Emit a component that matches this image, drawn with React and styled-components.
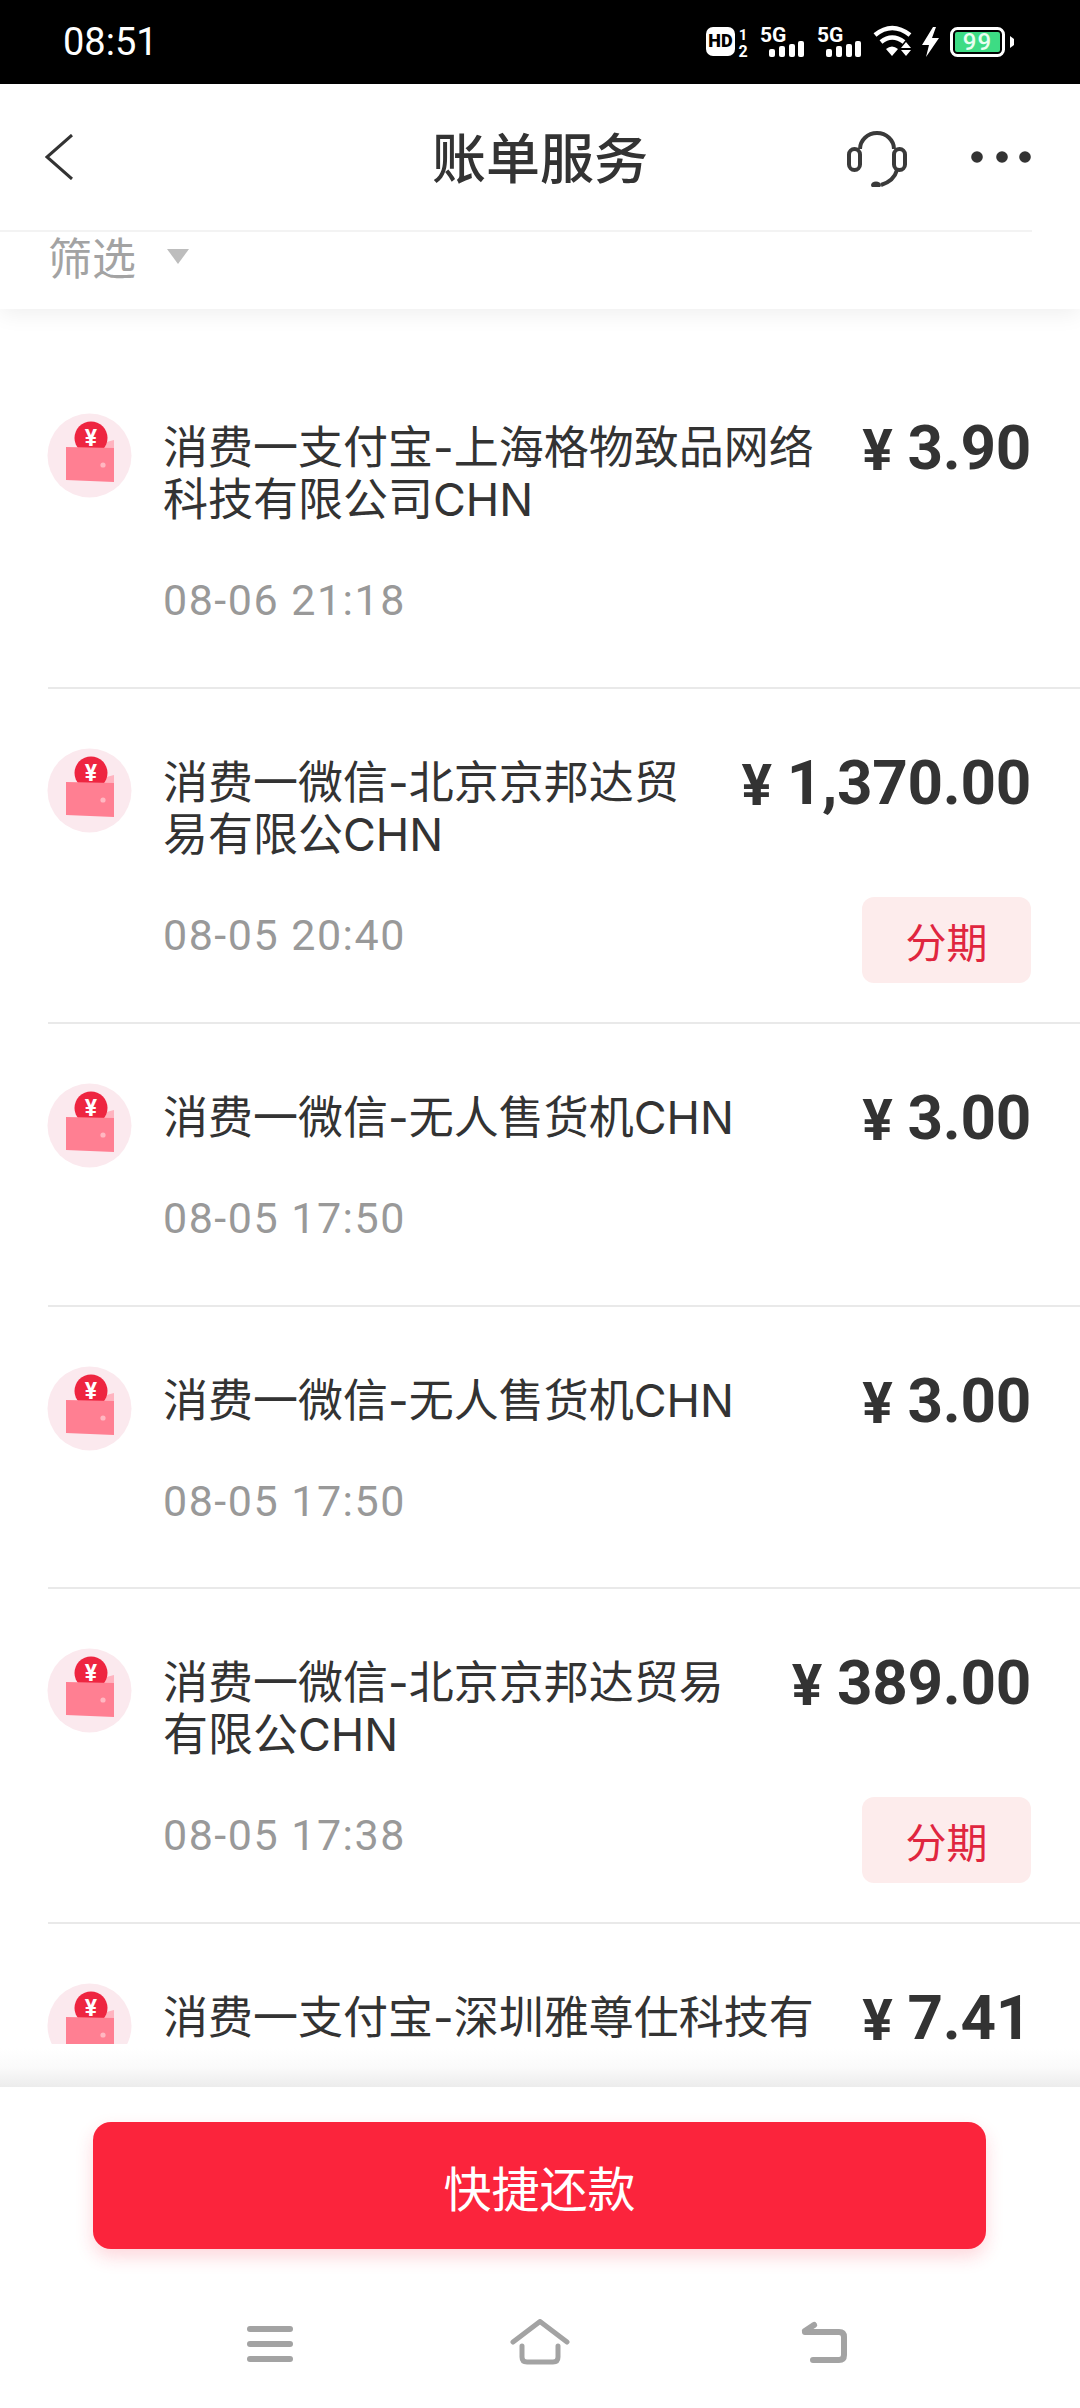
import React from 'react';
import styled, { createGlobalStyle } from 'styled-components';

const CJK = '"Noto Sans CJK SC", "Noto Sans", sans-serif';

const GlobalStyle = createGlobalStyle`
  html, body { margin: 0; padding: 0; background: #fff; }
  body { font-family: ${CJK}; overflow: hidden; }
`;

const Page = styled.div`
  width: 1080px;
  height: 2408px;
  display: flex;
  flex-direction: column;
  background: #fff;
  overflow: hidden;
`;

const StatusBar = styled.div`
  height: 84px;
  flex: none;
  background: #000;
  color: #fff;
  display: flex;
  align-items: center;
  justify-content: space-between;
  padding: 0 64px 0 63px;
  font: 400 38px Roboto, sans-serif;
`;

const TopPanel = styled.div`
  flex: none;
  background: #fff;
  position: relative;
  z-index: 2;
  box-shadow: 0 4px 22px rgba(0, 0, 0, 0.07);
`;

const Header = styled.div`
  height: 146px;
  padding-right: 49px;
  display: grid;
  grid-template-columns: 1fr auto 1fr;
  align-items: center;
`;

const HeaderLine = styled.div`
  width: 1032px;
  height: 2px;
  background: #f3f3f3;
`;

const BackButton = styled.div`
  padding-left: 45px;
  display: flex;
`;

const Title = styled.div`
  font-size: 54px;
  font-weight: 500;
  color: #333;
  line-height: 1;
  margin: 0 0 2px 49px;
`;

const HeaderActions = styled.div`
  display: flex;
  justify-content: flex-end;
  align-items: center;
  gap: 64px;
`;

const FilterRow = styled.div`
  height: 77px;
  display: flex;
  align-items: flex-start;
  padding-left: 48px;
  gap: 31px;
  color: #a3a3a3;
  font-size: 44px;
  line-height: 48px;
`;

const Caret = styled.span`
  width: 0;
  height: 0;
  margin-top: 17px;
  border-left: 11px solid transparent;
  border-right: 11px solid transparent;
  border-top: 15px solid #bdbdbd;
`;

const ListArea = styled.div`
  height: 1735px;
  flex: none;
  padding-top: 45px;
  box-sizing: border-box;
  overflow: hidden;
  background: #fff;
`;

const Row = styled.div`
  margin-left: 48px;
  padding: 59px 49px 61px 0;
  border-bottom: 2px solid #e9e9e9;
  box-sizing: border-box;
  height: ${(p) => p.$height}px;
  display: flex;
  gap: 31px;
`;

const RowIcon = styled.svg`
  width: 85px;
  height: 85px;
  flex: none;
  margin-left: -1px;
`;

const RowBody = styled.div`
  flex: 1;
  min-width: 0;
  padding-top: 9px;
`;

const RowTop = styled.div`
  display: flex;
  justify-content: space-between;
  gap: 36px;
`;

const RowName = styled.div`
  flex: 1;
  font-family: Inter, ${CJK};
  font-size: 45px;
  line-height: 52px;
  color: #333;
`;

const Amount = styled.div`
  flex: none;
  display: flex;
  align-items: center;
  height: 52px;
  line-height: 52px;
  gap: 15px;
  color: #333;
  font-family: Roboto, sans-serif;
  font-weight: 700;
  font-size: 62px;
  letter-spacing: -0.3px;
`;

const Yen = styled.span`
  font-size: 57px;
  margin-top: 5px;
`;

const RowFoot = styled.div`
  margin-top: 48px;
  height: 53px;
  display: flex;
  justify-content: space-between;
  align-items: flex-start;
`;

const RowTime = styled.div`
  font: 400 43px/53px Roboto, sans-serif;
  letter-spacing: 1.5px;
  color: #999;
`;

const SplitTag = styled.div`
  margin-top: -12px;
  width: 169px;
  height: 86px;
  border-radius: 12px;
  background: #fdecec;
  color: #e0263f;
  font-size: 41px;
  display: flex;
  align-items: center;
  justify-content: center;
  flex: none;
`;

const BottomFade = styled.div`
  height: 43px;
  flex: none;
  background: linear-gradient(to bottom, #ffffff 10%, #fafafa 55%, #ececec 100%);
`;

const BottomPanel = styled.div`
  flex: 1;
  display: flex;
  flex-direction: column;
  background: #fff;
`;

const PayButton = styled.div`
  margin: 35px 94px 0 93px;
  height: 127px;
  border-radius: 18px;
  background: #fb243c;
  box-shadow: 0 8px 18px rgba(251, 36, 60, 0.18);
  color: #fff;
  font-size: 48px;
  display: flex;
  align-items: center;
  justify-content: center;
`;

const NavBar = styled.div`
  margin-top: 70px;
  height: 46px;
  display: grid;
  grid-template-columns: 1fr auto 1fr;
  align-items: start;
  padding: 0 232px;
`;

const NavLeft = styled.svg`
  margin: 7px 0 0 15px;
`;

const NavRight = styled.svg`
  justify-self: end;
  margin-top: 2px;
`;

const StatusIcons = () => (
  <svg width="310" height="64" viewBox="708 10 310 64" fill="#fff">
    <rect x="708" y="27" width="29" height="29" rx="7" />
    <text x="722.5" y="47" fontFamily="Roboto" fontWeight="900" fontSize="18" textAnchor="middle" fill="#000">HD</text>
    <text x="745" y="40" fontFamily="Roboto" fontWeight="700" fontSize="15" textAnchor="middle">1</text>
    <text x="745" y="57" fontFamily="Roboto" fontWeight="700" fontSize="16" textAnchor="middle">2</text>
    {[762, 819].map((x) => (
      <g key={x}>
        <text x={x} y="42" fontFamily="Roboto" fontWeight="700" fontSize="21">5G</text>
        <rect x={x + 9} y="49" width="6" height="8" rx="2" />
        <rect x={x + 19} y="46" width="6" height="11" rx="2" />
        <rect x={x + 29} y="44" width="6" height="13" rx="2" />
        <rect x={x + 38} y="41" width="6" height="16" rx="2" />
      </g>
    ))}
    <g fill="none" stroke="#fff" strokeWidth="4.5">
      <path d="M877 35 Q894 21 912 35" />
      <path d="M883 42 Q894 33 906 42" />
    </g>
    <path d="M888 49 Q894 44 900 49 L894 56 Z" />
    <path d="M908 42 L913 48 L903 48 Z M903 50 L913 50 L908 56 Z" />
    <path d="M935 27 L924 45 L931 45 L928 57 L941 38 L934 38 L938 27 Z" />
    <rect x="953.5" y="28.5" width="52" height="27" rx="6" fill="none" stroke="#fff" strokeWidth="3" />
    <rect x="957" y="32" width="45" height="20" rx="2" fill="#3ddc84" />
    <text x="979.5" y="50" fontFamily="Roboto" fontWeight="500" fontSize="24" letterSpacing="1" textAnchor="middle" fill="#e8fff1">99</text>
    <path d="M1012 36 L1016 39 L1016 45 L1012 48 Z" />
  </svg>
);

const Headset = () => (
  <svg width="60" height="56" viewBox="0 0 60 56" fill="none" stroke="#3a3a3a" strokeWidth="4" style={{ marginTop: 4 }}>
    <path d="M13 18 A17 16 0 0 1 47 18" />
    <rect x="2" y="18" width="11" height="21" rx="5.5" />
    <rect x="47" y="18" width="11" height="21" rx="5.5" />
    <path d="M50 39 Q47 50 34 54" />
    <ellipse cx="29" cy="54" rx="5" ry="3.5" fill="#3a3a3a" stroke="none" />
  </svg>
);

const MoreDots = () => (
  <svg width="60" height="12" viewBox="0 0 60 12" fill="#333">
    <circle cx="6" cy="6" r="5.8" />
    <circle cx="31" cy="6" r="5.8" />
    <circle cx="54" cy="6" r="5.8" />
  </svg>
);

const WalletIcon = () => (
  <RowIcon viewBox="0 0 85 85">
    <circle cx="42.5" cy="42.5" r="42" fill="#fbe9ee" />
    <path d="M52 31 L67 27 L67 40 L52 40 Z" fill="#ffb3bf" />
    <circle cx="44" cy="25" r="16.5" fill="#ee2540" />
    <text x="44" y="33" textAnchor="middle" fontFamily="Roboto" fontWeight="700" fontSize="23" fill="#fff">¥</text>
    <path d="M19 34 L67 35 L67 69 L19 67 Z" fill="#ff7f92" />
    <circle cx="56" cy="52" r="2.6" fill="#ffb8c2" />
  </RowIcon>
);

const bills = [
  { name: '消费一支付宝-上海格物致品网络科技有限公司CHN', amount: '3.90', time: '08-06 21:18', height: 335 },
  { name: '消费一微信-北京京邦达贸易有限公CHN', amount: '1,370.00', time: '08-05 20:40', height: 335, split: true },
  { name: '消费一微信-无人售货机CHN', amount: '3.00', time: '08-05 17:50', height: 283 },
  { name: '消费一微信-无人售货机CHN', amount: '3.00', time: '08-05 17:50', height: 282 },
  { name: '消费一微信-北京京邦达贸易有限公CHN', amount: '389.00', time: '08-05 17:38', height: 335, split: true },
  { name: '消费一支付宝-深圳雅尊仕科技有', amount: '7.41', height: 335 },
];

export default function App() {
  return (
    <Page>
      <GlobalStyle />
      <StatusBar>
        <span>08:51</span>
        <StatusIcons />
      </StatusBar>
      <TopPanel>
        <Header>
          <BackButton>
            <svg width="28" height="46" viewBox="0 0 28 46" fill="none" stroke="#333" strokeWidth="3">
              <path d="M27 1 L2 23 L27 45" />
            </svg>
          </BackButton>
          <Title>账单服务</Title>
          <HeaderActions>
            <Headset />
            <MoreDots />
          </HeaderActions>
        </Header>
        <HeaderLine />
        <FilterRow>
          <span>筛选</span>
          <Caret />
        </FilterRow>
      </TopPanel>
      <ListArea>
        {bills.map((b, i) => (
          <Row key={i} $height={b.height}>
            <WalletIcon />
            <RowBody>
              <RowTop>
                <RowName>{b.name}</RowName>
                <Amount>
                  <Yen>¥</Yen>
                  {b.amount}
                </Amount>
              </RowTop>
              {b.time && (
                <RowFoot>
                  <RowTime>{b.time}</RowTime>
                  {b.split && <SplitTag>分期</SplitTag>}
                </RowFoot>
              )}
            </RowBody>
          </Row>
        ))}
      </ListArea>
      <BottomFade />
      <BottomPanel>
        <PayButton>快捷还款</PayButton>
        <NavBar>
          <NavLeft width="46" height="36" viewBox="0 0 46 36" fill="#a3a3a3">
            <rect y="0" width="46" height="6" rx="3" />
            <rect y="15" width="46" height="6" rx="3" />
            <rect y="30" width="46" height="6" rx="3" />
          </NavLeft>
          <svg width="60" height="46" viewBox="0 0 60 46" fill="none" stroke="#a3a3a3" strokeWidth="5" strokeLinecap="round" strokeLinejoin="round">
            <path d="M3 23 L30 2.5 L57 23" />
            <path d="M12 27 L12 38 Q12 43 17 43 L43 43 Q48 43 48 38 L48 27" />
          </svg>
          <NavRight width="48" height="42" viewBox="0 0 48 42" fill="none" stroke="#a3a3a3" strokeWidth="6" strokeLinecap="round" strokeLinejoin="round">
            <path d="M5 11 L39 11 Q44 11 44 16 L44 34 Q44 39 39 39 L13 39" />
            <path d="M14 4 L5 10" />
          </NavRight>
        </NavBar>
      </BottomPanel>
    </Page>
  );
}
